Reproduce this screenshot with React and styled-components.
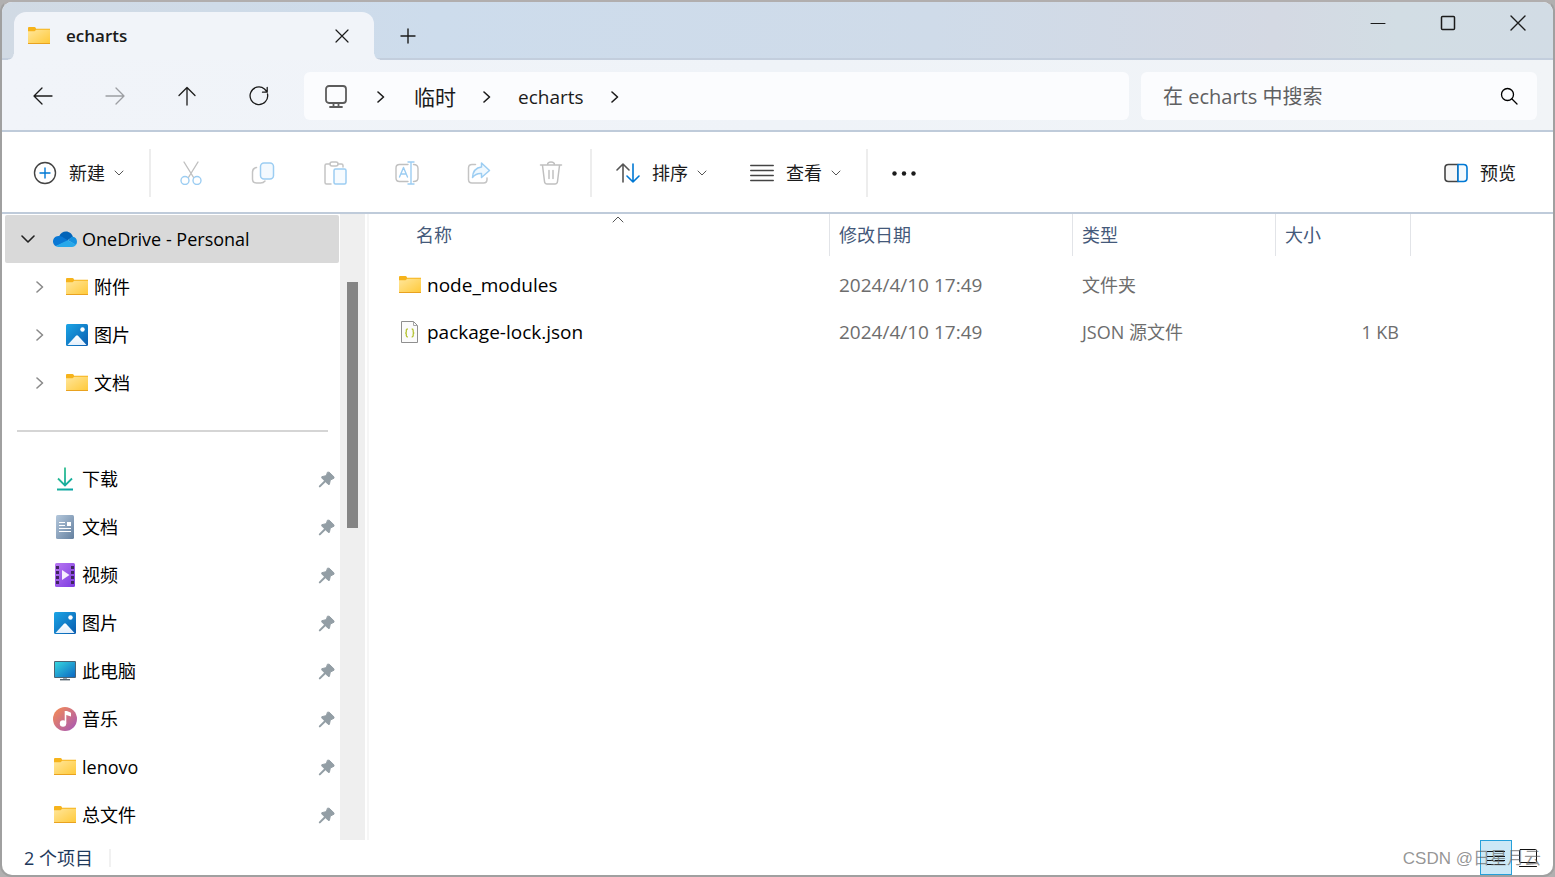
import React from "react";
import styled, { createGlobalStyle, css } from "styled-components";

const GlobalStyle = createGlobalStyle`
  *, *::before, *::after { box-sizing: border-box; }
  body {
    margin: 0;
    background: #b1b0b0;
    color: #000;
    font: 18px/24px "Open Sans", "Noto Sans CJK SC", sans-serif;
  }
  button, input { font: inherit; color: inherit; }
  svg { display: block; flex: none; }
`;

const Window = styled.main`
  position: relative;
  display: flex;
  flex-direction: column;
  height: 100vh;
  min-height: 480px;
  border: 2px solid #a0a0a0;
  border-top-color: #b1aeae;
  border-radius: 12px;
  background: #fff;
  overflow: hidden;
`;

/* Title bar */

const TitleBar = styled.header`
  display: flex;
  flex: none;
  height: 58px;
  padding-left: 12px;
  border-bottom: 2px solid #c3cedd;
  background: linear-gradient(90deg, #d1dae4 0%, #cddcec 28%, #cfdbe9 60%, #d4d9e3 82%, #d2dde4 90%, #d2dce5 100%);
`;

const Tab = styled.div`
  position: relative;
  display: flex;
  align-items: center;
  width: 360px;
  margin: 10px 0 -2px;
  padding: 0 16px 0 13px;
  border-radius: 12px 12px 0 0;
  background: #f1f4f9;
  font-weight: 600;
  font-size: 17px;
  color: #1b1b1b;

  &::before, &::after {
    content: "";
    position: absolute;
    bottom: 0;
    width: 6px;
    height: 6px;
  }
  &::before { right: 100%; background: radial-gradient(circle at 0 0, transparent 5px, #f1f4f9 6px); }
  &::after { left: 100%; background: radial-gradient(circle at 100% 0, transparent 5px, #f1f4f9 6px); }
`;

const TabTitle = styled.span`
  flex: 1;
  margin-left: 15px;
`;

const PlainButton = styled.button`
  display: flex;
  align-items: center;
  justify-content: center;
  padding: 0;
  border: 0;
  border-radius: 6px;
  background: none;
  color: #1b1b1b;
`;

const TabButton = styled(PlainButton)`
  width: 32px;
  height: 32px;
`;

const NewTabButton = styled(TabButton)`
  align-self: center;
  margin: 12px 0 0 18px;
`;

const Controls = styled.div`
  display: flex;
  margin-left: auto;
`;

const ControlButton = styled(PlainButton)`
  width: 70px;
  height: 41px;
`;

/* Navigation bar */

const NavBar = styled.nav`
  display: flex;
  flex: none;
  padding: 12px 16px 10px 5px;
  border-bottom: 2px solid #bfcbda;
  background: linear-gradient(90deg, #f1f4f9, #eff3f8 50%, #f1f4f7);
`;

const NavButton = styled(PlainButton)`
  width: 72px;
  height: 48px;
  color: ${(p) => (p.disabled ? "#9c9ea2" : "#1b1b1b")};
`;

const AddressBar = styled.div`
  display: flex;
  flex: 1;
  align-items: center;
  min-width: 0;
  height: 48px;
  margin: 0 12px 0 9px;
  padding: 1px 0 0 20px;
  border-radius: 6px;
  background: #fbfcfe;
  color: #1b1b1b;
`;

const Crumb = styled.a`
  color: inherit;
  font-size: ${(p) => (p.$latin ? 19 : 21)}px;
  text-decoration: none;
  white-space: nowrap;
`;

const CrumbArrow = styled.span`
  display: flex;
  justify-content: center;
  width: ${(p) => (p.$first ? 66 : 62)}px;
`;

const SearchBox = styled.label`
  display: flex;
  align-items: center;
  width: 396px;
  height: 48px;
  padding: 0 19px 0 22px;
  border-radius: 6px;
  background: #fbfcfe;
`;

const SearchInput = styled.input`
  flex: 1;
  min-width: 0;
  height: 32px;
  padding: 0;
  border: 0;
  outline: 0;
  background: none;
  font-size: 20px;
  &::placeholder { color: #5f6062; opacity: 1; }
`;

/* Command bar */

const Toolbar = styled.div`
  display: flex;
  flex: none;
  align-items: center;
  height: 82px;
  padding: 2px 25px 0 19px;
  border-bottom: 2px solid #bfcbda;
`;

const Command = styled(PlainButton)`
  gap: 12px;
  height: 48px;
  margin-left: ${(p) => (p.$spaced ? 19 : 0)}px;
  padding: 0 12px;
  white-space: nowrap;
  color: #1b1b1b;
`;

const CommandText = styled.span`
  display: flex;
  align-items: center;
  gap: 9px;
`;

const IconCommand = styled(PlainButton)`
  width: ${(p) => p.$width || 72}px;
  height: 48px;
`;

const Separator = styled.span`
  width: 2px;
  height: 48px;
  margin: 0 ${(p) => p.$after}px 0 ${(p) => p.$before}px;
  background: #ededed;
`;

const Push = styled.span`
  flex: 1;
`;

/* Body */

const Body = styled.div`
  display: flex;
  flex: 1;
  min-height: 0;
`;

const Sidebar = styled.aside`
  flex: none;
  width: 338px;
  padding: 1px 1px 0 3px;
  overflow: hidden;
`;

const NavList = styled.ul`
  margin: 0;
  padding: 0;
  list-style: none;
`;

const NavItem = styled.li`
  display: flex;
  align-items: center;
  height: 48px;
  padding: 0 4px 0 ${(p) => (p.$child ? 23 : 11)}px;
  border-radius: 2px;
  ${(p) => p.$selected && css`background: #d9d9d9;`}
`;

const Expander = styled(PlainButton)`
  width: 24px;
  height: 24px;
  margin-right: 13px;
  color: ${(p) => (p.$open ? "#222" : "#8a8a8a")};
`;

const ItemIcon = styled.span`
  display: flex;
  justify-content: center;
  width: 24px;
  margin-right: 5px;
`;

const ItemLink = styled.a`
  flex: 1;
  color: #000;
  text-decoration: none;
  white-space: nowrap;
`;

const Rule = styled.hr`
  height: 2px;
  margin: 23px 11px 23px 12px;
  border: 0;
  background: #d5d5d5;
`;

const ScrollTrack = styled.div`
  flex: none;
  width: 25px;
  padding: 68px 7px 0;
  background: #efefef;
`;

const ScrollThumb = styled.div`
  height: 246px;
  background: #858585;
`;

const Content = styled.section`
  flex: 1;
  min-width: 0;
  margin-left: 2px;
  border-left: 2px solid #f6f6f6;
  overflow: hidden;
`;

const FileTable = styled.table`
  width: 100%;
  table-layout: fixed;
  border-collapse: collapse;
  text-align: left;
`;

const HeadCell = styled.th`
  width: ${(p) => (p.$width ? `${p.$width}px` : "auto")};
  height: 47px;
  padding: 0;
  vertical-align: top;
  font-weight: 400;
  color: #44597a;
`;

const HeadLabel = styled.div`
  position: relative;
  height: 42px;
  padding: 9px 0 0 ${(p) => (p.$name ? 47 : 9)}px;
  border-right: 1px solid #e2e4e8;
`;

const SortMark = styled.span`
  position: absolute;
  top: 2px;
  left: 243px;
`;

const Cell = styled.td`
  height: 47px;
  padding: 0 ${(p) => (p.$right ? 12 : 0)}px 0 9px;
  font-size: ${(p) => (p.$large ? 19 : 18)}px;
  text-align: ${(p) => (p.$right ? "right" : "left")};
  color: #6d6d6d;
  white-space: nowrap;
`;

const FileName = styled.div`
  display: flex;
  align-items: center;
  gap: 5px;
  padding-left: 20px;
  color: #000;
`;

/* Status bar */

const StatusBar = styled.footer`
  display: flex;
  flex: none;
  align-items: center;
  height: 35px;
  padding: 0 9px 0 22px;
  color: #1e395b;
`;

const StatusDivider = styled.span`
  width: 2px;
  height: 18px;
  margin-left: 16px;
  background: #f1f1f1;
`;

const ViewButton = styled(PlainButton)`
  width: 32px;
  height: 35px;
  border-radius: 0;
  ${(p) => p.$active && css`
    border: 1px solid #26a0da;
    background: #cce8f6;
  `}
`;

const Watermark = styled.span`
  position: absolute;
  right: 12px;
  bottom: 4px;
  color: rgba(90, 90, 90, 0.65);
  font: 17px/24px "Liberation Sans", "Noto Sans CJK SC", sans-serif;
  pointer-events: none;
`;

/* Icons */

const Line = ({ w = 24, h = 24, vw, vh, sw = 1.5, children }) => (
  <svg width={w} height={h} viewBox={`0 0 ${vw || w} ${vh || h}`} fill="none" stroke="currentColor"
    strokeWidth={sw} strokeLinecap="round" strokeLinejoin="round" aria-hidden="true">
    {children}
  </svg>
);

const FolderIcon = () => (
  <svg width="24" height="24" viewBox="0 0 24 24" aria-hidden="true">
    <defs>
      <linearGradient id="folder" x1="0" y1="0" x2="1" y2="1">
        <stop offset="0" stopColor="#ffe69b" />
        <stop offset="1" stopColor="#ffc938" />
      </linearGradient>
    </defs>
    <path d="M1 4a1 1 0 0 1 1-1h5.500q.7 0 1 .6l.6 1.200H23V8H1z" fill="#f6b31b" />
    <path d="M1 7.200h6.500L9.300 5.800H23V20H1z" fill="url(#folder)" />
    <path d="M1 19h22v.5a.6.6 0 0 1-.6.6H1.600a.6.6 0 0 1-.6-.6z" fill="#e9a21f" />
  </svg>
);

const PicturesIcon = () => (
  <svg width="24" height="24" viewBox="0 0 24 24" aria-hidden="true">
    <defs>
      <linearGradient id="pic" x1="0" y1="0" x2="1" y2="1">
        <stop offset="0" stopColor="#1ba5e6" />
        <stop offset="1" stopColor="#0a5cae" />
      </linearGradient>
      <linearGradient id="hill" x1="0" y1="0" x2="0" y2="1">
        <stop offset="0" stopColor="#fff" />
        <stop offset="1" stopColor="#e3effb" />
      </linearGradient>
    </defs>
    <rect x="1" y="1" width="22" height="22" rx="1.500" fill="url(#pic)" />
    <circle cx="17.500" cy="6.500" r="2.200" fill="#fff" />
    <path d="M2.500 22 11 12.800q1-1 2 0L21.500 22z" fill="url(#hill)" />
  </svg>
);

const CloudIcon = () => (
  <svg width="24" height="24" viewBox="0 0 24 24" aria-hidden="true">
    <path d="M6 9.500C7.400 6.300 10 4.500 13 4.500c3.400 0 6 2.300 6.900 5.300L12 15z" fill="#0364b8" />
    <path d="M0 14.500C0 11.600 2.200 9.200 5.200 9c2.200-.1 3.700.5 5 1.400l5.500 3.300L3 19.300C1.200 18.300 0 16.600 0 14.500z" fill="#0a78d4" />
    <path d="M15 13.200l3.200-3c.6-.4 1.200-.5 1.700-.4 2.300.3 4.100 2.300 4.100 4.900 0 1.200-.4 2.300-1.100 3.200z" fill="#1490df" />
    <path d="M2.600 19 12 14.600l2.700-1.400 8.500 4.400c-.9 1.500-2.300 2.400-4.200 2.400H5.500c-1.100 0-2-.3-2.900-1z" fill="#28a8ea" />
  </svg>
);

const DownloadIcon = () => (
  <svg width="24" height="24" viewBox="0 0 24 24" fill="none" stroke="url(#dl)" strokeWidth="1.800" aria-hidden="true">
    <defs>
      <linearGradient id="dl" gradientUnits="userSpaceOnUse" x1="4" y1="1" x2="20" y2="23">
        <stop offset="0" stopColor="#3ac48d" />
        <stop offset="1" stopColor="#06a3a5" />
      </linearGradient>
    </defs>
    <path d="M12 .5v17M5 11.500l7 7 7-7M4 22.500h16" />
  </svg>
);

const DocumentIcon = () => (
  <svg width="24" height="24" viewBox="0 0 24 24" aria-hidden="true">
    <defs>
      <linearGradient id="doc" x1="0" y1="0" x2="1" y2="1">
        <stop offset="0" stopColor="#b4c8dc" />
        <stop offset="1" stopColor="#64809f" />
      </linearGradient>
    </defs>
    <rect x="3" y="0" width="18" height="24" rx="1.500" fill="url(#doc)" />
    <path d="M6 7.500h6M6 10.500h6M6 13.500h12M6 16.500h12" stroke="#fff" strokeWidth="1.200" />
    <rect x="14" y="7" width="4" height="4" fill="#fff" />
  </svg>
);

const VideoIcon = () => (
  <svg width="24" height="24" viewBox="0 0 24 24" aria-hidden="true">
    <defs>
      <linearGradient id="vid" x1="0" y1="0" x2="1" y2="1">
        <stop offset="0" stopColor="#b877f2" />
        <stop offset="1" stopColor="#7d3be0" />
      </linearGradient>
    </defs>
    <rect x="2" y="0" width="20" height="24" rx="1.500" fill="url(#vid)" />
    {[3, 8, 13, 18].map((y) => (
      <g key={y} fill="#40265f">
        <rect x="3" y={y} width="3" height="3" />
        <rect x="18" y={y} width="3" height="3" />
      </g>
    ))}
    <path d="M9 7v10l7.500-5z" fill="#f5eefe" />
  </svg>
);

const ComputerIcon = () => (
  <svg width="24" height="24" viewBox="0 0 24 24" aria-hidden="true">
    <defs>
      <linearGradient id="pc" x1="0" y1="0" x2="1" y2="1">
        <stop offset="0" stopColor="#36d6e0" />
        <stop offset="1" stopColor="#0b67c2" />
      </linearGradient>
    </defs>
    <rect x="1" y="2" width="22" height="17" rx="1" fill="#4b6475" />
    <rect x="2" y="3" width="20" height="15" fill="url(#pc)" />
    <path d="M10 19h4v1.500h-4z" fill="#9aa8b3" />
    <path d="M7 20h10v1.400H7z" fill="#56656f" />
  </svg>
);

const MusicIcon = () => (
  <svg width="24" height="24" viewBox="0 0 24 24" aria-hidden="true">
    <defs>
      <linearGradient id="mus" x1="0" y1="0" x2="1" y2="1">
        <stop offset=".1" stopColor="#f0885a" />
        <stop offset=".9" stopColor="#ac5bb0" />
      </linearGradient>
    </defs>
    <circle cx="12" cy="12" r="12" fill="url(#mus)" />
    <circle cx="10" cy="16.500" r="3.200" fill="#fff" />
    <path d="M11.700 4h2.200l3.600 1.600c.4.200.5.400.5.800v3.200l-4.700-1.500v8.400h-1.600z" fill="#fff" />
  </svg>
);

const PinIcon = () => (
  <svg width="17" height="17" viewBox="0 0 17 17" fill="#939ea5" stroke="#939ea5" strokeLinejoin="round" strokeLinecap="round" aria-hidden="true">
    <path d="M9.800 1.200h1.400l4.800 4.700v1.300l-3.700 1.900-.9 4.300h-1.200L3.800 7V5.700l4.200-1z" strokeWidth="1" />
    <path d="M7 10.200 1.800 15.400" strokeWidth="2" />
  </svg>
);

const JsonIcon = () => (
  <svg width="24" height="24" viewBox="0 0 24 24" fill="none" aria-hidden="true">
    <path d="M3.500 1.500h12l4 4v17h-16z" fill="#fbfbfb" stroke="#8f8f8f" />
    <path d="M15.500 1.500v4h4" stroke="#a5a5a5" />
    <path d="M9.800 9c-1.300 0-1.500.4-1.500 1.400v1.500q0 1-1 1.100 1 .1 1 1.100v1.500c0 1 .2 1.400 1.500 1.400M13.700 9c1.300 0 1.500.4 1.500 1.400v1.500q0 1 1 1.100-1 .1-1 1.100v1.500c0 1-.2 1.400-1.500 1.400" stroke="#b5c334" strokeWidth="1.300" />
  </svg>
);

const ChevronRight = () => <Line w={8} h={14} sw={1.6}><path d="M1 2l5.500 5L1 12" /></Line>;
const SmallDown = () => <Line w={10} h={10} sw={1}><g stroke="#555"><path d="M1 3l4 4 4-4" /></g></Line>;

const quickAccess = [
  ["下载", DownloadIcon],
  ["文档", DocumentIcon],
  ["视频", VideoIcon],
  ["图片", PicturesIcon],
  ["此电脑", ComputerIcon],
  ["音乐", MusicIcon],
  ["lenovo", FolderIcon],
  ["总文件", FolderIcon],
];

const oneDrive = [
  ["附件", FolderIcon],
  ["图片", PicturesIcon],
  ["文档", FolderIcon],
];

const files = [
  { name: "node_modules", Icon: FolderIcon, date: "2024/4/10 17:49", type: "文件夹", size: "" },
  { name: "package-lock.json", Icon: JsonIcon, date: "2024/4/10 17:49", type: "JSON 源文件", size: "1 KB" },
];

const columns = [
  ["名称", 461],
  ["修改日期", 243],
  ["类型", 203],
  ["大小", 135],
];

export default function App() {
  return (
    <>
      <GlobalStyle />
      <Window>
        <TitleBar>
          <Tab>
            <FolderIcon />
            <TabTitle>echarts</TabTitle>
            <TabButton aria-label="关闭标签页"><Line w={14} h={14} sw={1.2}><path d="M1 1l12 12M13 1L1 13" /></Line></TabButton>
          </Tab>
          <NewTabButton aria-label="新标签页"><Line w={16} h={16} sw={1.4}><path d="M8 1v14M1 8h14" /></Line></NewTabButton>
          <Controls>
            <ControlButton aria-label="最小化"><Line w={16} h={16} sw={1}><path d="M1 8.500h14" /></Line></ControlButton>
            <ControlButton aria-label="最大化"><Line w={16} h={16} sw={1.5}><rect x="1.500" y="1.500" width="13" height="13" rx="1" /></Line></ControlButton>
            <ControlButton aria-label="关闭"><Line w={16} h={16} sw={1.4}><path d="M1 1l14 14M15 1L1 15" /></Line></ControlButton>
          </Controls>
        </TitleBar>

        <NavBar>
          <NavButton aria-label="后退"><Line sw={1.3}><path d="M21 12H3.500M11 4l-8 8 8 8" /></Line></NavButton>
          <NavButton aria-label="前进" disabled><Line sw={1.3}><path d="M3 12h17.500M13 4l8 8-8 8" /></Line></NavButton>
          <NavButton aria-label="向上"><Line sw={1.3}><path d="M12 21V3.500M4 11.500l8-8 8 8" /></Line></NavButton>
          <NavButton aria-label="刷新"><Line sw={1.3}><path d="M20.500 10a8.800 8.800 0 1 1-3-5l2.500 2.800M20.200 3.500v4.700h-4.700" /></Line></NavButton>
          <AddressBar>
            <Line sw={1.8}><g stroke="#5c5c5c"><rect x="2" y="1" width="20" height="17" rx="3" /><path d="M9.500 18v3.500M14.500 18v3.500M6 22h12" /></g></Line>
            <CrumbArrow $first><ChevronRight /></CrumbArrow>
            <Crumb href="#">临时</Crumb>
            <CrumbArrow><ChevronRight /></CrumbArrow>
            <Crumb href="#" $latin>echarts</Crumb>
            <CrumbArrow><ChevronRight /></CrumbArrow>
          </AddressBar>
          <SearchBox>
            <SearchInput aria-label="搜索" placeholder="在 echarts 中搜索" />
            <Line w={18} h={18} sw={1.3}><circle cx="7.500" cy="7.500" r="6" /><path d="M12 12l5 5" /></Line>
          </SearchBox>
        </NavBar>

        <Toolbar>
          <Command>
            <Line sw={1.4}><circle cx="12" cy="12" r="10.500" stroke="#444" /><path d="M12 7v10M7 12h10" stroke="#0078d4" /></Line>
            <CommandText>新建<SmallDown /></CommandText>
          </Command>
          <Separator $before={13} $after={4} />
          <IconCommand disabled aria-label="剪切">
            <Line sw={1.4}>
              <path d="M5 1l10.500 17M19 1L8.500 18" stroke="#c0c0c0" />
              <g stroke="#9ccdf2" fill="#fff"><circle cx="6" cy="19.500" r="4" /><circle cx="18" cy="19.500" r="4" /></g>
            </Line>
          </IconCommand>
          <IconCommand disabled aria-label="复制">
            <Line sw={1.5}>
              <path d="M5.500 6.500C3 7 1.500 8.500 1.500 11v7q0 4 4 4h4q3 0 4.500-2" stroke="#c4c4c4" />
              <rect x="9.500" y="2" width="13" height="16" rx="3.500" stroke="#9ccdf2" fill="#f3f9fe" />
            </Line>
          </IconCommand>
          <IconCommand disabled aria-label="粘贴">
            <Line sw={1.5}>
              <path d="M7 3H3.500Q2 3 2 4.500v17Q2 23 3.500 23H8M15 3h3.500Q20 3 20 4.500V6" stroke="#c4c4c4" />
              <rect x="7" y="1" width="8" height="4" rx="2" stroke="#c4c4c4" />
              <rect x="11" y="8" width="12" height="15" rx="1.500" stroke="#9ccdf2" fill="#f6fbff" />
            </Line>
          </IconCommand>
          <IconCommand disabled aria-label="重命名">
            <Line sw={1.4}>
              <path d="M13 3.500H4.500Q1 3.500 1 7v10q0 3.500 3.500 3.500H13M18.500 3.500q4.500 0 4.500 4V17q0 3.500-4.500 3.500" stroke="#c0c0c0" />
              <path d="M4.500 16L8.500 6.500 12.500 16M6 13h5M13 1h6M13 23h6M16 1v22" stroke="#9ccdf2" />
            </Line>
          </IconCommand>
          <IconCommand disabled aria-label="共享">
            <Line sw={1.5}>
              <path d="M8.500 3.500H5Q1.500 3.500 1.500 7v11.500Q1.500 22 5 22h11.500q3.500 0 3.500-3.500V17" stroke="#c4c4c4" />
              <path d="M14.500 2l8 7.500-8 7V12.500q-5.500-.5-9 4 .5-9.500 9-10.500z" stroke="#9ccdf2" fill="#eff8fe" />
            </Line>
          </IconCommand>
          <IconCommand disabled aria-label="删除">
            <Line sw={1.5}>
              <g stroke="#c0c0c0"><path d="M1.500 4h21M8.500 4q0-3 3.500-3t3.500 3M3.500 4.500l2 16q.3 2.500 2.500 2.500h8q2.200 0 2.500-2.500l2-16M10 9.500v8M14 9.500v8" /></g>
            </Line>
          </IconCommand>
          <Separator $before={3} $after={12} />
          <Command>
            <Line sw={1.6}><path d="M7 21V3M1 9l6-6 6 6" stroke="#555" /><path d="M17 3v18M11 15l6 6 6-6" stroke="#0078d4" /></Line>
            <CommandText>排序<SmallDown /></CommandText>
          </Command>
          <Command $spaced>
            <Line sw={1.3}><path d="M.7 4.500h22.600M.7 9.500h22.600M.7 14.500h22.600M.7 19.500h22.600" stroke="#444" /></Line>
            <CommandText>查看<SmallDown /></CommandText>
          </Command>
          <Separator $before={13} $after={12} />
          <IconCommand $width={48} aria-label="更多">
            <svg width="24" height="24" viewBox="0 0 24 24" fill="#1b1b1b" aria-hidden="true">
              <circle cx="2.500" cy="12.500" r="2.200" /><circle cx="12" cy="12.500" r="2.200" /><circle cx="21.500" cy="12.500" r="2.200" />
            </svg>
          </IconCommand>
          <Push />
          <Command>
            <Line sw={1.6}>
              <path d="M14 3.500H4.500Q1 3.500 1 7v10q0 3.500 3.500 3.500H14z" stroke="#444" fill="#f6f6f6" />
              <path d="M14 3.500h5.500Q23 3.500 23 7v10q0 3.500-3.500 3.500H14z" stroke="#0078d4" fill="#f3fafe" />
            </Line>
            预览
          </Command>
        </Toolbar>

        <Body>
          <Sidebar>
            <NavList>
              <NavItem $selected>
                <Expander $open aria-label="折叠"><Line w={14} h={8} sw={1.6}><path d="M1 1l6 6 6-6" /></Line></Expander>
                <ItemIcon><CloudIcon /></ItemIcon>
                <ItemLink href="#">OneDrive - Personal</ItemLink>
              </NavItem>
              {oneDrive.map(([label, Icon]) => (
                <NavItem $child key={label}>
                  <Expander aria-label="展开"><ChevronRight /></Expander>
                  <ItemIcon><Icon /></ItemIcon>
                  <ItemLink href="#">{label}</ItemLink>
                </NavItem>
              ))}
            </NavList>
            <Rule />
            <NavList>
              {quickAccess.map(([label, Icon]) => (
                <NavItem key={label}>
                  <Expander as="span" />
                  <ItemIcon><Icon /></ItemIcon>
                  <ItemLink href="#">{label}</ItemLink>
                  <PinIcon />
                </NavItem>
              ))}
            </NavList>
          </Sidebar>
          <ScrollTrack><ScrollThumb /></ScrollTrack>
          <Content>
            <FileTable>
              <thead>
                <tr>
                  {columns.map(([label, width], i) => (
                    <HeadCell key={label} $width={width} scope="col">
                      <HeadLabel $name={i === 0}>
                        {label}
                        {i === 0 && <SortMark><Line w={12} h={7} sw={1}><g stroke="#555"><path d="M1 6l5-5 5 5" /></g></Line></SortMark>}
                      </HeadLabel>
                    </HeadCell>
                  ))}
                  <HeadCell as="td" />
                </tr>
              </thead>
              <tbody>
                {files.map(({ name, Icon, date, type, size }) => (
                  <tr key={name}>
                    <Cell $large><FileName><Icon />{name}</FileName></Cell>
                    <Cell $large>{date}</Cell>
                    <Cell>{type}</Cell>
                    <Cell $right>{size}</Cell>
                    <Cell />
                  </tr>
                ))}
              </tbody>
            </FileTable>
          </Content>
        </Body>

        <StatusBar>
          2 个项目
          <StatusDivider />
          <Push />
          <ViewButton $active aria-label="详细信息">
            <Line w={18} h={18} sw={1}><g stroke="#111"><path d="M0 2.500h6M0 7.500h6M0 11.500h6M0 15.500h6M8 2.500h10M8 7.500h10M8 11.500h10M8 15.500h10" /></g></Line>
          </ViewButton>
          <ViewButton aria-label="大图标">
            <Line w={18} h={18} sw={1}><g stroke="#111"><rect x=".5" y=".5" width="17" height="13" rx="1" /><path d="M.5 17.500h17" /></g></Line>
          </ViewButton>
        </StatusBar>
        <Watermark>CSDN @日星月云</Watermark>
      </Window>
    </>
  );
}
